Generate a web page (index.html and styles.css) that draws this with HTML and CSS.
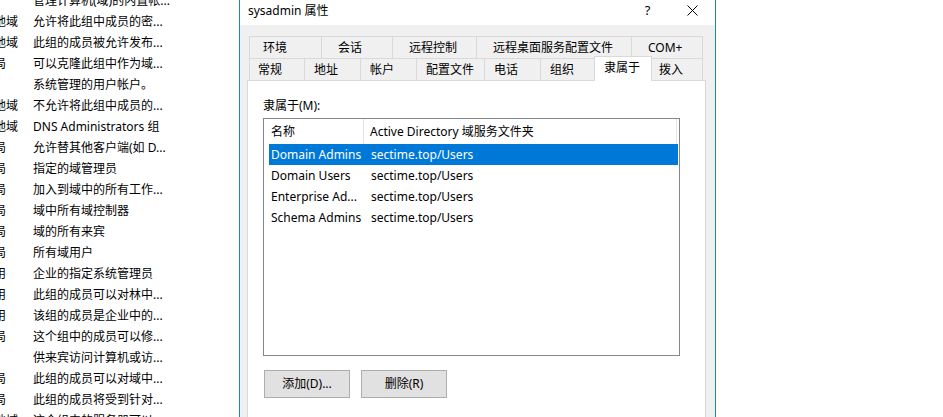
FILE: index.html
```html
<!DOCTYPE html>
<html lang="zh-CN">
<head>
<meta charset="utf-8">
<title>sysadmin 属性</title>
<link rel="stylesheet" href="styles.css">
</head>
<body>
<div class="bglist">
  <div class="rows">
    <div class="row"><span class="c1"><span class="pre">用户</span></span><span class="c2">管理计算机(域)的内置帐...</span></div>
    <div class="row"><span class="c1"><span class="pre">安全组 - </span>本地域</span><span class="c2">允许将此组中成员的密...</span></div>
    <div class="row"><span class="c1"><span class="pre">安全组 - </span>本地域</span><span class="c2">此组的成员被允许发布...</span></div>
    <div class="row"><span class="c1"><span class="pre">安全组 - </span>全局</span><span class="c2">可以克隆此组中作为域...</span></div>
    <div class="row"><span class="c1"><span class="pre">用户</span></span><span class="c2">系统管理的用户帐户。</span></div>
    <div class="row"><span class="c1"><span class="pre">安全组 - </span>本地域</span><span class="c2">不允许将此组中成员的...</span></div>
    <div class="row"><span class="c1"><span class="pre">安全组 - </span>本地域</span><span class="c2">DNS Administrators 组</span></div>
    <div class="row"><span class="c1"><span class="pre">安全组 - </span>全局</span><span class="c2">允许替其他客户端(如 D...</span></div>
    <div class="row"><span class="c1"><span class="pre">安全组 - </span>全局</span><span class="c2">指定的域管理员</span></div>
    <div class="row"><span class="c1"><span class="pre">安全组 - </span>全局</span><span class="c2">加入到域中的所有工作...</span></div>
    <div class="row"><span class="c1"><span class="pre">安全组 - </span>全局</span><span class="c2">域中所有域控制器</span></div>
    <div class="row"><span class="c1"><span class="pre">安全组 - </span>全局</span><span class="c2">域的所有来宾</span></div>
    <div class="row"><span class="c1"><span class="pre">安全组 - </span>全局</span><span class="c2">所有域用户</span></div>
    <div class="row"><span class="c1"><span class="pre">安全组 - </span>通用</span><span class="c2">企业的指定系统管理员</span></div>
    <div class="row"><span class="c1"><span class="pre">安全组 - </span>通用</span><span class="c2">此组的成员可以对林中...</span></div>
    <div class="row"><span class="c1"><span class="pre">安全组 - </span>通用</span><span class="c2">该组的成员是企业中的...</span></div>
    <div class="row"><span class="c1"><span class="pre">安全组 - </span>全局</span><span class="c2">这个组中的成员可以修...</span></div>
    <div class="row"><span class="c1"><span class="pre">用户</span></span><span class="c2">供来宾访问计算机或访...</span></div>
    <div class="row"><span class="c1"><span class="pre">安全组 - </span>全局</span><span class="c2">此组的成员可以对域中...</span></div>
    <div class="row"><span class="c1"><span class="pre">安全组 - </span>全局</span><span class="c2">此组的成员将受到针对...</span></div>
    <div class="row"><span class="c1"><span class="pre">安全组 - </span>本地域</span><span class="c2">这个组中的服务器可以...</span></div>
  </div>
</div>

<div class="dialog">
  <div class="titlebar">
    <span class="title">sysadmin 属性</span>
    <span class="tbtn help">?</span>
    <span class="tbtn close">
      <svg width="11" height="11" viewBox="0 0 11 11"><path d="M0.5 0.5 L10.5 10.5 M10.5 0.5 L0.5 10.5" stroke="#000" stroke-width="1" fill="none"/></svg>
    </span>
  </div>
  <div class="body">
    <div class="tabrow r1">
      <div class="tab first" style="width:72px">环境</div>
      <div class="tab" style="width:71px">会话</div>
      <div class="tab" style="width:84px">远程控制</div>
      <div class="tab" style="width:155px">远程桌面服务配置文件</div>
      <div class="tab last" style="width:72px">COM+</div>
    </div>
    <div class="tabrow r2">
      <div class="tab first" style="width:55px">常规</div>
      <div class="tab" style="width:56px">地址</div>
      <div class="tab" style="width:56px">帐户</div>
      <div class="tab" style="width:68px">配置文件</div>
      <div class="tab" style="width:56px">电话</div>
      <div class="tab" style="width:54px">组织</div>
      <div class="tab sel" style="width:58px">隶属于</div>
      <div class="tab last" style="width:51px">拨入</div>
    </div>
    <div class="panel">
      <div class="label">隶属于(M):</div>
      <div class="listbox">
        <div class="lhead">
          <div class="hc1">名称</div>
          <div class="hc2">Active Directory 域服务文件夹</div>
        </div>
        <div class="lrow selected"><span class="rc1">Domain Admins</span><span class="rc2">sectime.top/Users</span></div>
        <div class="lrow"><span class="rc1">Domain Users</span><span class="rc2">sectime.top/Users</span></div>
        <div class="lrow"><span class="rc1">Enterprise Ad...</span><span class="rc2">sectime.top/Users</span></div>
        <div class="lrow"><span class="rc1">Schema Admins</span><span class="rc2">sectime.top/Users</span></div>
      </div>
      <div class="buttons">
        <button class="btn">添加(D)...</button>
        <button class="btn">删除(R)</button>
      </div>
    </div>
  </div>
</div>

<div class="rest"></div>
</body>
</html>
```

FILE: styles.css
```css
html, body {
  margin: 0;
  padding: 0;
}
body {
  width: 943px;
  height: 417px;
  overflow: hidden;
  display: flex;
  align-items: flex-start;
  background: #fff;
  font-family: "Noto Sans", "Noto Sans CJK SC", sans-serif;
  font-size: 12px;
  color: #000;
}

/* background list */
.bglist {
  width: 239px;
  flex: none;
  height: 417px;
  overflow: hidden;
}
.rows {
  margin-top: -10px;
}
.row {
  height: 21px;
  line-height: 21px;
  display: flex;
  white-space: nowrap;
}
.c1 {
  flex: none;
  width: 99px;
  margin-left: -66px;
  overflow: hidden;
}
.pre {
  display: inline-block;
  width: 48px;
  overflow: hidden;
  vertical-align: top;
}
.c2 {
  flex: none;
}

/* dialog */
.dialog {
  width: 475px;
  flex: none;
  border-left: 1px solid #1b7fd6;
  border-right: 1px solid #1b7fd6;
  height: 417px;
  overflow: hidden;
}
.titlebar {
  height: 25px;
  background: #fff;
  display: flex;
  align-items: flex-start;
  line-height: 21px;
}
.title {
  padding-left: 8px;
  flex: 1;
}
.tbtn {
  width: 45px;
  height: 20px;
  display: flex;
  justify-content: center;
  align-items: center;
}
.help {
  font-size: 13px;
}
.close svg {
  display: block;
}
.body {
  height: 392px;
  background: #f0f0f0;
  padding-top: 11px;
  box-sizing: border-box;
}
.tabrow {
  display: flex;
  margin-left: 9px;
  height: 22px;
}
.tab {
  box-sizing: border-box;
  height: 22px;
  line-height: 21px;
  border-top: 1px solid #d9d9d9;
  border-left: 1px solid #d9d9d9;
  white-space: nowrap;
  background: #f0f0f0;
}
.tab.last {
  border-right: 1px solid #d9d9d9;
}
.r1 .tab { padding-left: 16px; }
.r1 .tab.first { padding-left: 13px; }
.r2 .tab { padding-left: 9px; }
.r2 .tab.first { padding-left: 8px; }
.r2 .tab.last { padding-left: 7px; }
.tab.sel {
  position: relative;
  z-index: 1;
  height: 25px;
  margin-top: -2px;
  background: #fff;
  border-right: 1px solid #d9d9d9;
}
.tab.sel + .tab {
  border-left: none;
}

.panel {
  margin-left: 7px;
  width: 459px;
  box-sizing: border-box;
  height: 337px;
  background: #fff;
  border: 1px solid #d9d9d9;
  border-bottom: none;
  padding-left: 15px;
  padding-top: 17px;
}
.label {
  line-height: 16px;
  height: 16px;
}
.listbox {
  margin-top: 4px;
  width: 417px;
  height: 238px;
  box-sizing: border-box;
  border: 1px solid #828790;
  background: #fff;
}
.lhead {
  display: flex;
  height: 25px;
  line-height: 25px;
}
.hc1 {
  width: 100px;
  box-sizing: border-box;
  padding-left: 7px;
  border-right: 1px solid #e5e5e5;
}
.hc2 {
  width: 313px;
  box-sizing: border-box;
  padding-left: 6px;
  border-right: 1px solid #e5e5e5;
}
.lrow {
  display: flex;
  margin-left: 5px;
  width: 409px;
  height: 21px;
  line-height: 21px;
  white-space: nowrap;
}
.lrow.selected {
  background: #0078d7;
  color: #fff;
}
.rc1 {
  width: 96px;
  box-sizing: border-box;
  padding-left: 2px;
  overflow: hidden;
}
.rc2 {
  padding-left: 6px;
}
.buttons {
  display: flex;
  gap: 11px;
  margin-top: 14px;
  margin-left: 1px;
}
.btn {
  width: 86px;
  height: 28px;
  box-sizing: border-box;
  background: #e1e1e1;
  border: 1px solid #adadad;
  font-family: inherit;
  font-size: 12px;
  line-height: 16px;
  color: #000;
  padding: 0;
  border-radius: 0;
}

.rest {
  flex: 1;
  height: 417px;
  background: #fff;
}
```
